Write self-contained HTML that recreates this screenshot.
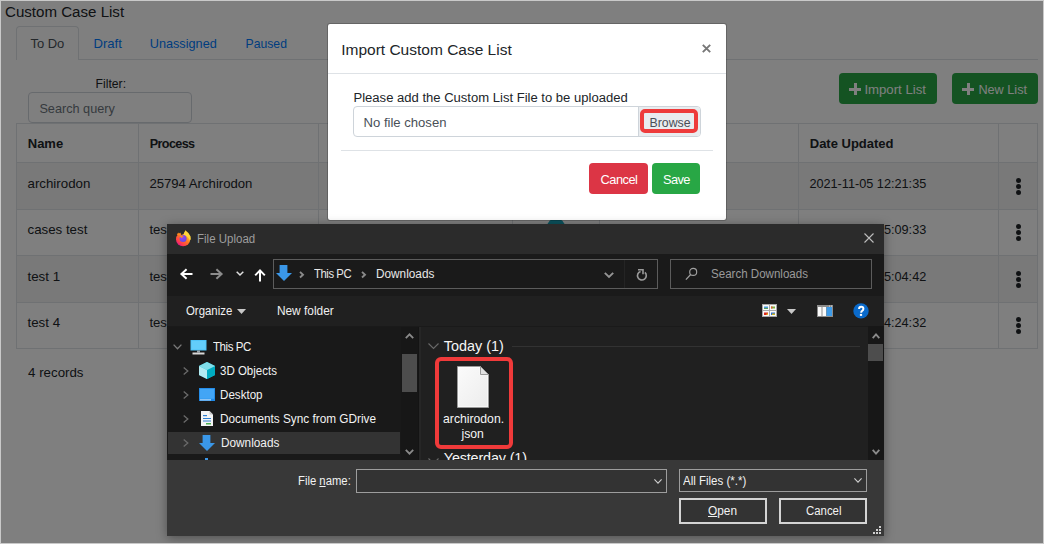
<!DOCTYPE html>
<html><head><meta charset="utf-8"><title>Import Custom Case List</title>
<style>
html,body{margin:0;padding:0;}
body{width:1044px;height:544px;position:relative;overflow:hidden;background:#fff;font-family:"Liberation Sans", sans-serif;}
.t{position:absolute;white-space:nowrap;line-height:1;}
.r{position:absolute;box-sizing:border-box;}
svg{position:absolute;overflow:visible;}
</style></head><body>

<div class="t" style="left:5.00px;top:4.00px;font-size:15.1px;color:#212529;font-weight:400;">Custom Case List</div>
<div class="r" style="left:16px;top:59px;width:1022px;height:1px;background:#dee2e6;"></div>
<div class="r" style="left:16px;top:26px;width:63px;height:34px;background:#fff;border:1px solid #dee2e6;border-bottom:none;border-radius:4px 4px 0 0;"></div>
<div class="t" style="left:30.40px;top:37.00px;font-size:13.0px;color:#495057;font-weight:400;">To Do</div>
<div class="t" style="left:93.50px;top:37.00px;font-size:13.1px;color:#007bff;font-weight:400;">Draft</div>
<div class="t" style="left:149.75px;top:38.00px;font-size:12.7px;color:#007bff;font-weight:400;">Unassigned</div>
<div class="t" style="left:245.60px;top:38.00px;font-size:12.2px;color:#007bff;font-weight:400;">Paused</div>
<div class="t" style="left:95.60px;top:78.00px;font-size:12.2px;color:#212529;font-weight:400;">Filter:</div>
<div class="r" style="left:28px;top:92px;width:164px;height:31px;background:#fff;border:1px solid #ced4da;border-radius:4px;"></div>
<div class="t" style="left:39.40px;top:103.00px;font-size:12.7px;color:#6c757d;font-weight:400;">Search query</div>
<div class="r" style="left:839px;top:73px;width:98px;height:31px;background:#28a745;border-radius:4px;"></div>
<div class="r" style="left:849px;top:87.5px;width:12px;height:3.0px;background:#fff;"></div>
<div class="r" style="left:853.5px;top:83px;width:3.0px;height:12px;background:#fff;"></div>
<div class="t" style="left:864.40px;top:83.00px;font-size:13.2px;color:#fff;font-weight:400;">Import List</div>
<div class="r" style="left:952px;top:73px;width:86px;height:31px;background:#28a745;border-radius:4px;"></div>
<div class="r" style="left:962px;top:87.5px;width:12px;height:3.0px;background:#fff;"></div>
<div class="r" style="left:966.5px;top:83px;width:3.0px;height:12px;background:#fff;"></div>
<div class="t" style="left:978.40px;top:84.00px;font-size:12.7px;color:#fff;font-weight:400;">New List</div>
<div class="r" style="left:16px;top:162px;width:1022px;height:47px;background:#f2f2f2;"></div>
<div class="r" style="left:16px;top:255px;width:1022px;height:47px;background:#f2f2f2;"></div>
<div class="r" style="left:16px;top:123px;width:1022px;height:1px;background:#dee2e6;"></div>
<div class="r" style="left:16px;top:162px;width:1022px;height:1px;background:#dee2e6;"></div>
<div class="r" style="left:16px;top:209px;width:1022px;height:1px;background:#dee2e6;"></div>
<div class="r" style="left:16px;top:255px;width:1022px;height:1px;background:#dee2e6;"></div>
<div class="r" style="left:16px;top:302px;width:1022px;height:1px;background:#dee2e6;"></div>
<div class="r" style="left:16px;top:348px;width:1022px;height:1px;background:#dee2e6;"></div>
<div class="r" style="left:16px;top:123px;width:1px;height:226px;background:#dee2e6;"></div>
<div class="r" style="left:138px;top:123px;width:1px;height:226px;background:#dee2e6;"></div>
<div class="r" style="left:318px;top:123px;width:1px;height:226px;background:#dee2e6;"></div>
<div class="r" style="left:512px;top:123px;width:1px;height:226px;background:#dee2e6;"></div>
<div class="r" style="left:599px;top:123px;width:1px;height:226px;background:#dee2e6;"></div>
<div class="r" style="left:798px;top:123px;width:1px;height:226px;background:#dee2e6;"></div>
<div class="r" style="left:998px;top:123px;width:1px;height:226px;background:#dee2e6;"></div>
<div class="r" style="left:1037px;top:123px;width:1px;height:226px;background:#dee2e6;"></div>
<div class="t" style="left:27.75px;top:137.00px;font-size:13.0px;color:#212529;font-weight:700;">Name</div>
<div class="t" style="left:149.75px;top:138.00px;font-size:12.6px;color:#212529;font-weight:700;letter-spacing:-0.62px;">Process</div>
<div class="t" style="left:809.75px;top:137.00px;font-size:13.0px;color:#212529;font-weight:700;">Date Updated</div>
<div class="t" style="left:27.50px;top:177.00px;font-size:13.3px;color:#212529;font-weight:400;">archirodon</div>
<div class="t" style="left:149.40px;top:177.00px;font-size:13.15px;color:#212529;font-weight:400;">25794 Archirodon</div>
<div class="t" style="left:809.40px;top:178.00px;font-size:12.7px;color:#212529;font-weight:400;">2021-11-05 12:21:35</div>
<div class="r" style="left:1015.5px;top:177.50000000000003px;width:5.399999999999977px;height:5.399999999999977px;background:#212529;border-radius:50%;"></div>
<div class="r" style="left:1015.5px;top:183.70000000000002px;width:5.399999999999977px;height:5.399999999999977px;background:#212529;border-radius:50%;"></div>
<div class="r" style="left:1015.5px;top:189.9px;width:5.399999999999977px;height:5.399999999999977px;background:#212529;border-radius:50%;"></div>
<div class="t" style="left:27.50px;top:223.00px;font-size:13.3px;color:#212529;font-weight:400;">cases test</div>
<div class="t" style="left:149.40px;top:223.00px;font-size:13.15px;color:#212529;font-weight:400;">test</div>
<div class="t" style="left:809.40px;top:224.00px;font-size:12.7px;color:#212529;font-weight:400;">2021-11-05 15:09:33</div>
<div class="r" style="left:1015.5px;top:223.50000000000003px;width:5.399999999999977px;height:5.399999999999977px;background:#212529;border-radius:50%;"></div>
<div class="r" style="left:1015.5px;top:229.70000000000002px;width:5.399999999999977px;height:5.399999999999977px;background:#212529;border-radius:50%;"></div>
<div class="r" style="left:1015.5px;top:235.9px;width:5.399999999999977px;height:5.399999999999977px;background:#212529;border-radius:50%;"></div>
<div class="t" style="left:27.50px;top:270.00px;font-size:13.3px;color:#212529;font-weight:400;">test 1</div>
<div class="t" style="left:149.40px;top:270.00px;font-size:13.15px;color:#212529;font-weight:400;">test</div>
<div class="t" style="left:809.40px;top:271.00px;font-size:12.7px;color:#212529;font-weight:400;">2021-11-05 15:04:42</div>
<div class="r" style="left:1015.5px;top:270.5px;width:5.399999999999977px;height:5.399999999999977px;background:#212529;border-radius:50%;"></div>
<div class="r" style="left:1015.5px;top:276.7px;width:5.399999999999977px;height:5.399999999999977px;background:#212529;border-radius:50%;"></div>
<div class="r" style="left:1015.5px;top:282.9px;width:5.399999999999977px;height:5.399999999999977px;background:#212529;border-radius:50%;"></div>
<div class="t" style="left:27.50px;top:316.00px;font-size:13.3px;color:#212529;font-weight:400;">test 4</div>
<div class="t" style="left:149.40px;top:316.00px;font-size:13.15px;color:#212529;font-weight:400;">test</div>
<div class="t" style="left:809.40px;top:317.00px;font-size:12.7px;color:#212529;font-weight:400;">2021-11-05 14:24:32</div>
<div class="r" style="left:1015.5px;top:316.5px;width:5.399999999999977px;height:5.399999999999977px;background:#212529;border-radius:50%;"></div>
<div class="r" style="left:1015.5px;top:322.7px;width:5.399999999999977px;height:5.399999999999977px;background:#212529;border-radius:50%;"></div>
<div class="r" style="left:1015.5px;top:328.9px;width:5.399999999999977px;height:5.399999999999977px;background:#212529;border-radius:50%;"></div>
<div class="t" style="left:28.10px;top:366.00px;font-size:13.3px;color:#212529;font-weight:400;">4 records</div>
<div class="r" style="left:546.5px;top:218px;width:18.0px;height:18px;background:#17a2b8;border-radius:50%;"></div>
<div class="r" style="left:0px;top:0px;width:1044px;height:544px;background:rgba(0,0,0,0.5);"></div>
<div class="r" style="left:327px;top:23px;width:400px;height:198px;background:#fff;border:1px solid rgba(0,0,0,.2);border-radius:3px;background-clip:padding-box;"></div>
<div class="t" style="left:341.20px;top:42.00px;font-size:15.5px;color:#212529;font-weight:400;">Import Custom Case List</div>
<div class="r" style="left:328px;top:73px;width:398px;height:1px;background:#dee2e6;"></div>
<svg style="left:702px;top:44px" width="9" height="9" viewBox="0 0 9 9"><path d="M0.8 0.8L8.2 8.2M8.2 0.8L0.8 8.2" stroke="#777" stroke-width="1.9"/></svg>
<div class="t" style="left:353.50px;top:91.00px;font-size:13.05px;color:#212529;font-weight:400;">Please add the Custom List File to be uploaded</div>
<div class="r" style="left:353px;top:106px;width:348px;height:31px;background:#fff;border:1px solid #ced4da;border-radius:4px;"></div>
<div class="t" style="left:363.50px;top:116.00px;font-size:13.1px;color:#495057;font-weight:400;">No file chosen</div>
<div class="r" style="left:638px;top:107px;width:62px;height:29px;background:#e9ecef;border-left:1px solid #ced4da;border-radius:0 3px 3px 0;"></div>
<div class="r" style="left:640px;top:109px;width:58px;height:24px;border:4px solid #ee3b3b;border-radius:5px;"></div>
<div class="t" style="left:649.50px;top:117.00px;font-size:12.3px;color:#495057;font-weight:400;">Browse</div>
<div class="r" style="left:341px;top:150px;width:372px;height:1px;background:#dee2e6;"></div>
<div class="r" style="left:589px;top:163px;width:59px;height:31px;background:#dc3545;border-radius:4px;"></div>
<div class="t" style="left:600.60px;top:174.00px;font-size:12.8px;color:#fff;font-weight:400;letter-spacing:-0.5px;">Cancel</div>
<div class="r" style="left:652px;top:163px;width:48px;height:31px;background:#28a745;border-radius:4px;"></div>
<div class="t" style="left:663.00px;top:174.00px;font-size:12.8px;color:#fff;font-weight:400;letter-spacing:-0.6px;">Save</div>
<div class="r" style="left:167px;top:224px;width:717px;height:312px;background:#202020;box-shadow:0 2px 10px rgba(0,0,0,0.38);"></div>
<div class="r" style="left:167px;top:224px;width:717px;height:30px;background:#2b2b2b;"></div>
<svg style="left:175px;top:230px" width="16" height="16" viewBox="0 0 16 16">
<defs><linearGradient id="ffg" x1="0.9" y1="0.1" x2="0.2" y2="0.95"><stop offset="0" stop-color="#ffe03a"/><stop offset="0.45" stop-color="#ff7a1f"/><stop offset="0.8" stop-color="#ff3b4e"/><stop offset="1" stop-color="#e0148f"/></linearGradient>
<radialGradient id="ffp" cx="0.4" cy="0.3" r="0.8"><stop offset="0" stop-color="#9b45f0"/><stop offset="1" stop-color="#5a48e0"/></radialGradient></defs>
<circle cx="8.1" cy="9.2" r="7.1" fill="url(#ffg)"/>
<path d="M4.6 0.5 H10 L8.6 4.6 Q7 4.1 6 4.9Z" fill="#2b2b2b"/>
<path d="M8.2 4.8 Q9.5 2.5 10.3 0.2 Q13.5 2.2 15.6 6.5 Q16.2 9 15 10.5 Q13 6 8.2 4.8Z" fill="#ffd43b"/>
<path d="M1.8 4.8 L3.2 2.6 L4.2 4 L5.8 3.3 L5.6 5.2Z" fill="#ff8a1f"/>
<circle cx="8.1" cy="8.6" r="3.5" fill="url(#ffp)"/>
<path d="M4.8 6.4 Q6.6 4.6 9 6 Q7.2 6.6 6.8 8.2Z" fill="#ff8c1a"/>
</svg>
<div class="t" style="left:196.50px;top:233.00px;font-size:12.0px;color:#9d9d9d;font-weight:400;transform:scaleX(0.9583);transform-origin:0 0;">File Upload</div>
<svg style="left:864px;top:233px" width="10" height="10" viewBox="0 0 10 10"><path d="M0.5 0.5L9.5 9.5M9.5 0.5L0.5 9.5" stroke="#bdbdbd" stroke-width="1.1"/></svg>
<div class="r" style="left:167px;top:254px;width:717px;height:42px;background:#1a1a1a;"></div>
<svg style="left:180px;top:268px" width="13" height="12" viewBox="0 0 13 12"><path d="M12.5 6H1.8M6.6 1.2L1.4 6L6.6 10.8" stroke="#fff" stroke-width="2" fill="none"/></svg>
<svg style="left:210px;top:268px" width="13" height="12" viewBox="0 0 13 12"><path d="M0.5 6H11.2M6.4 1.2L11.6 6L6.4 10.8" stroke="#8c8c8c" stroke-width="2" fill="none"/></svg>
<svg style="left:236px;top:271px" width="8" height="5" viewBox="0 0 8 5"><path d="M0.7 0.7L4 4L7.3 0.7" stroke="#e0e0e0" stroke-width="1.5" fill="none"/></svg>
<svg style="left:254px;top:269px" width="12" height="14" viewBox="0 0 12 14"><path d="M6 12.5V1.8M1.2 6.4L6 1.4L10.8 6.4" stroke="#fff" stroke-width="2" fill="none"/></svg>
<div class="r" style="left:273px;top:259px;width:385px;height:30px;background:#1a1a1a;border:1px solid #5c5c5c;"></div>
<div class="r" style="left:624px;top:260px;width:1px;height:28px;background:#242424;"></div>
<svg style="left:276px;top:265px" width="16" height="16" viewBox="0 0 16 16"><path d="M3.6 0H11.4V8H16L8 16L0 8H3.6Z" fill="#3a97e8"/></svg>
<svg style="left:299px;top:271px" width="6" height="8" viewBox="0 0 6 8"><path d="M1 0.9L4 3.7L1 6.5" stroke="#8a8a8a" stroke-width="1.9" fill="none"/></svg>
<div class="t" style="left:313.90px;top:268.00px;font-size:12.0px;color:#e8e8e8;font-weight:400;letter-spacing:-0.45px;transform:scaleX(0.9417);transform-origin:0 0;">This PC</div>
<svg style="left:361px;top:271px" width="6" height="8" viewBox="0 0 6 8"><path d="M1 0.9L4 3.7L1 6.5" stroke="#8a8a8a" stroke-width="1.9" fill="none"/></svg>
<div class="t" style="left:375.60px;top:268.00px;font-size:12.0px;color:#e8e8e8;font-weight:400;transform:scaleX(0.9833);transform-origin:0 0;">Downloads</div>
<svg style="left:604px;top:272px" width="10" height="6" viewBox="0 0 10 6"><path d="M0.8 0.8L5 5L9.2 0.8" stroke="#959595" stroke-width="1.9" fill="none"/></svg>
<svg style="left:636px;top:268px" width="12" height="13" viewBox="0 0 12 13"><path d="M8.9 4.4A4.4 4.4 0 1 1 4.6 3.4" stroke="#9a9a9a" stroke-width="1.6" fill="none"/><path d="M2 1.8H7V6.2" stroke="#9a9a9a" stroke-width="1.6" fill="none"/></svg>
<div class="r" style="left:670px;top:259px;width:202px;height:30px;background:#1a1a1a;border:1px solid #5c5c5c;"></div>
<svg style="left:685px;top:268px" width="13" height="13" viewBox="0 0 13 13"><circle cx="8.2" cy="3.9" r="3.5" stroke="#a0a0a0" stroke-width="1.15" fill="none"/><path d="M5.7 6.5L0.9 11.7" stroke="#a0a0a0" stroke-width="1.2"/></svg>
<div class="t" style="left:711.25px;top:268.00px;font-size:12.0px;color:#9a9a9a;font-weight:400;transform:scaleX(0.9625);transform-origin:0 0;">Search Downloads</div>
<div class="r" style="left:167px;top:296px;width:717px;height:30px;background:#202020;"></div>
<div class="t" style="left:185.60px;top:305.00px;font-size:12.0px;color:#f0f0f0;font-weight:400;transform:scaleX(0.9500);transform-origin:0 0;">Organize</div>
<svg style="left:237px;top:309px" width="9" height="5" viewBox="0 0 9 5"><path d="M0 0H9L4.5 5Z" fill="#c8c8c8"/></svg>
<div class="t" style="left:276.90px;top:306.00px;font-size:11.9px;color:#f0f0f0;font-weight:400;">New folder</div>
<svg style="left:762px;top:304px" width="15" height="13" viewBox="0 0 15 13">
<rect x="0" y="0" width="15" height="13" fill="#a8a8a8"/>
<rect x="1" y="1" width="6" height="5" fill="#fafafa"/><rect x="8" y="1" width="6" height="5" fill="#fafafa"/>
<rect x="1" y="7" width="6" height="5" fill="#fafafa"/><rect x="8" y="7" width="6" height="5" fill="#fafafa"/>
<rect x="2" y="2.5" width="4" height="2" fill="#4a9ad8"/><rect x="2" y="4" width="4" height="1" fill="#5aa05a"/>
<rect x="9" y="2.5" width="4" height="2" fill="#7cb342"/><rect x="9" y="2.5" width="1.5" height="2" fill="#e05a3a"/>
<rect x="2" y="8.5" width="4" height="2.5" fill="#d8281e"/><rect x="4.5" y="9.5" width="1.5" height="1.5" fill="#f0c020"/>
<rect x="9" y="8.5" width="4" height="2.5" fill="#2f6fd0"/><rect x="10" y="9.5" width="3" height="1.5" fill="#c8b020"/>
</svg>
<svg style="left:787px;top:309px" width="9" height="5" viewBox="0 0 9 5"><path d="M0 0H9L4.5 5Z" fill="#c8c8c8"/></svg>
<svg style="left:817px;top:305px" width="16" height="12" viewBox="0 0 16 12">
<rect x="0" y="0" width="16" height="12" fill="#8c8c8c"/>
<rect x="1" y="2" width="3.5" height="9" fill="#fafafa"/>
<rect x="5.5" y="2" width="3.5" height="9" fill="#fafafa"/>
<rect x="9.5" y="2" width="5.5" height="9" fill="#3d9be9"/>
<rect x="12" y="0.6" width="1" height="1" fill="#ddd"/><rect x="14" y="0.6" width="1" height="1" fill="#ddd"/>
</svg>
<svg style="left:853px;top:303px" width="16" height="16" viewBox="0 0 16 16"><circle cx="8" cy="7.9" r="7.7" fill="#0a6acb"/><path d="M6.1 6 Q6.1 3.8 8.2 3.8 Q10.4 3.8 10.4 5.8 Q10.4 7.1 9.1 7.9 Q8.2 8.4 8.2 9.8" stroke="#fff" stroke-width="2" fill="none"/><rect x="6.9" y="10.9" width="2.2" height="2" fill="#fff"/></svg>
<div class="r" style="left:167px;top:326px;width:251px;height:134px;background:#191919;"></div>
<div class="r" style="left:401px;top:326px;width:17px;height:134px;background:#171717;"></div>
<div class="r" style="left:402px;top:354px;width:15px;height:38px;background:#4d4d4d;"></div>
<svg style="left:405px;top:333px" width="9" height="6" viewBox="0 0 9 6"><path d="M0.8 5.2L4.5 1.3L8.2 5.2" stroke="#8a8a8a" stroke-width="1.8" fill="none"/></svg>
<svg style="left:405px;top:449px" width="9" height="6" viewBox="0 0 9 6"><path d="M0.8 0.8L4.5 4.7L8.2 0.8" stroke="#8a8a8a" stroke-width="1.8" fill="none"/></svg>
<div class="r" style="left:418px;top:326px;width:1px;height:134px;background:#141414;"></div>
<div class="r" style="left:419px;top:326px;width:2px;height:134px;background:#262626;"></div>
<div class="r" style="left:168px;top:432px;width:232px;height:22px;background:#333333;"></div>
<svg style="left:173px;top:344px" width="9" height="6" viewBox="0 0 9 6"><path d="M0.6 0.6L4.5 4.8L8.4 0.6" stroke="#7a7a7a" stroke-width="1.3" fill="none"/></svg>
<svg style="left:183px;top:367px" width="6" height="8" viewBox="0 0 6 8"><path d="M0.7 0.6L4.8 4L0.7 7.4" stroke="#6a6a6a" stroke-width="1.3" fill="none"/></svg>
<svg style="left:183px;top:391px" width="6" height="8" viewBox="0 0 6 8"><path d="M0.7 0.6L4.8 4L0.7 7.4" stroke="#6a6a6a" stroke-width="1.3" fill="none"/></svg>
<svg style="left:183px;top:415px" width="6" height="8" viewBox="0 0 6 8"><path d="M0.7 0.6L4.8 4L0.7 7.4" stroke="#6a6a6a" stroke-width="1.3" fill="none"/></svg>
<svg style="left:183px;top:439px" width="6" height="8" viewBox="0 0 6 8"><path d="M0.7 0.6L4.8 4L0.7 7.4" stroke="#6a6a6a" stroke-width="1.3" fill="none"/></svg>
<svg style="left:190px;top:340px" width="17" height="15" viewBox="0 0 17 15">
<rect x="0.5" y="0" width="16" height="10.5" fill="#4fc3f7"/><rect x="1.5" y="1" width="14" height="8.5" fill="#63cdfa"/>
<rect x="7" y="10.5" width="3" height="2" fill="#9aa7b0"/><rect x="2.5" y="12.5" width="12" height="2" fill="#d8d8d8"/>
</svg>
<div class="t" style="left:213.10px;top:341.00px;font-size:12.0px;color:#f2f2f2;font-weight:400;letter-spacing:-0.45px;transform:scaleX(0.9583);transform-origin:0 0;">This PC</div>
<svg style="left:199px;top:362px" width="16" height="17" viewBox="0 0 16 17">
<path d="M8 0L16 4V13L8 17L0 13V4Z" fill="#26c6da"/><path d="M0 4L8 8V17L0 13Z" fill="#b2ebf2"/><path d="M8 8L16 4V13L8 17Z" fill="#00acc1"/><path d="M8 0L16 4L8 8L0 4Z" fill="#80deea"/>
</svg>
<div class="t" style="left:220.00px;top:365.00px;font-size:12.0px;color:#f2f2f2;font-weight:400;transform:scaleX(0.9583);transform-origin:0 0;">3D Objects</div>
<svg style="left:199px;top:388px" width="16" height="13" viewBox="0 0 16 13">
<rect x="0" y="0" width="16" height="13" fill="#1e88e5"/><rect x="0.8" y="0.8" width="14.4" height="10" fill="#42a5f5"/><rect x="1" y="11.5" width="11" height="0.8" fill="#fff"/>
</svg>
<div class="t" style="left:220.00px;top:389.00px;font-size:12.0px;color:#f2f2f2;font-weight:400;transform:scaleX(0.9667);transform-origin:0 0;">Desktop</div>
<svg style="left:201px;top:411px" width="12" height="15" viewBox="0 0 12 15">
<path d="M0 0H8.5L12 3.5V15H0Z" fill="#f4f4f4"/><path d="M8.5 0V3.5H12Z" fill="#c8c8c8"/>
<rect x="2" y="4" width="4" height="1.2" fill="#2f7fd0"/><rect x="2" y="7" width="8" height="1" fill="#2f7fd0"/><rect x="2" y="9.5" width="8" height="1" fill="#2f7fd0"/><rect x="5" y="12" width="5" height="1.5" fill="#4caf50"/>
</svg>
<div class="t" style="left:220.00px;top:413.00px;font-size:12.0px;color:#f2f2f2;font-weight:400;transform:scaleX(0.9833);transform-origin:0 0;">Documents Sync from GDrive</div>
<svg style="left:199px;top:435px" width="16" height="16" viewBox="0 0 16 16"><path d="M3.6 0H11.4V8H16L8 16L0 8H3.6Z" fill="#3a97e8"/></svg>
<div class="t" style="left:220.60px;top:437.00px;font-size:12.0px;color:#f2f2f2;font-weight:400;transform:scaleX(0.9833);transform-origin:0 0;">Downloads</div>
<div class="r" style="left:205px;top:458px;width:3px;height:2px;background:#3c96e6;"></div>
<div class="r" style="left:421px;top:326px;width:447px;height:134px;background:#202020;"></div>
<div class="r" style="left:167px;top:326px;width:717px;height:1px;background:#1a1a1a;"></div>
<div class="r" style="left:868px;top:326px;width:16px;height:134px;background:#171717;"></div>
<div class="r" style="left:868px;top:344px;width:15px;height:17px;background:#4d4d4d;"></div>
<svg style="left:872px;top:333px" width="8" height="6" viewBox="0 0 8 6"><path d="M0.7 5.2L4 1.3L7.3 5.2" stroke="#8a8a8a" stroke-width="1.8" fill="none"/></svg>
<svg style="left:872px;top:449px" width="8" height="6" viewBox="0 0 8 6"><path d="M0.7 0.8L4 4.7L7.3 0.8" stroke="#8a8a8a" stroke-width="1.8" fill="none"/></svg>
<svg style="left:428px;top:343px" width="11" height="6" viewBox="0 0 11 6"><path d="M0.5 0.5L5.5 5.5L10.5 0.5" stroke="#6a6a6a" stroke-width="1.1" fill="none"/></svg>
<div class="t" style="left:443.75px;top:339.00px;font-size:14.4px;color:#f5f5f5;font-weight:400;">Today (1)</div>
<div class="r" style="left:512px;top:346px;width:348px;height:1px;background:#323232;"></div>
<div class="r" style="left:435px;top:357px;width:78px;height:92px;border:4px solid #f03a3a;border-radius:6px;"></div>
<svg style="left:457px;top:366px" width="32" height="42" viewBox="0 0 32 42">
<defs><linearGradient id="pg" x1="0" y1="0" x2="1" y2="1"><stop offset="0" stop-color="#fbfbfb"/><stop offset="1" stop-color="#ececec"/></linearGradient></defs>
<path d="M0.5 0.5H23.5L31.5 8.5V41.5H0.5Z" fill="url(#pg)" stroke="#9a9a9a" stroke-width="1"/>
<path d="M1.5 1.5H23V9H30.5V40.5H1.5Z" fill="none" stroke="#ffffff" stroke-width="0.8" opacity="0.7"/>
<path d="M23.5 0.5V8.5H31.5Z" fill="#e2e2e2" stroke="#9a9a9a" stroke-width="1" stroke-linejoin="round"/>
</svg>
<div class="t" style="left:443.10px;top:413.00px;font-size:12.2px;color:#f5f5f5;font-weight:400;">archirodon.</div>
<div class="t" style="left:461.50px;top:428.00px;font-size:12.2px;color:#f5f5f5;font-weight:400;">json</div>
<div style="position:absolute;left:421px;top:326px;width:447px;height:134px;overflow:hidden;">
<div class="t" style="left:22.75px;top:125px;font-size:14.4px;color:#f5f5f5;letter-spacing:-0.15px;">Yesterday (1)</div>
<svg style="left:7px;top:132px" width="11" height="6" viewBox="0 0 11 6"><path d="M0.5 0.5L5.5 5.5L10.5 0.5" stroke="#6a6a6a" stroke-width="1.1" fill="none"/></svg>
</div>
<div class="r" style="left:167px;top:460px;width:717px;height:76px;background:#383838;"></div>
<div class="t" style="left:297.50px;top:475.00px;font-size:12.0px;color:#f2f2f2;font-weight:400;transform:scaleX(0.9417);transform-origin:0 0;">File <u>n</u>ame:</div>
<div class="r" style="left:356px;top:469px;width:311px;height:24px;background:#333333;border:1px solid #9d9d9d;"></div>
<svg style="left:654px;top:479px" width="8" height="5" viewBox="0 0 8 5"><path d="M0.4 0.4L4 4.2L7.6 0.4" stroke="#cfcfcf" stroke-width="1.1" fill="none"/></svg>
<div class="r" style="left:679px;top:469px;width:188px;height:23px;background:#333333;border:1px solid #9d9d9d;"></div>
<div class="t" style="left:683.10px;top:475.00px;font-size:12.0px;color:#f2f2f2;font-weight:400;transform:scaleX(0.9583);transform-origin:0 0;">All Files (*.*)</div>
<svg style="left:854px;top:478px" width="8" height="5" viewBox="0 0 8 5"><path d="M0.4 0.4L4 4.2L7.6 0.4" stroke="#cfcfcf" stroke-width="1.1" fill="none"/></svg>
<div class="r" style="left:679px;top:498px;width:88px;height:26px;background:#333333;border:2px solid #d4d4d4;"></div>
<div class="t" style="left:708.00px;top:505.00px;font-size:12.0px;color:#f2f2f2;font-weight:400;transform:scaleX(0.9875);transform-origin:0 0;"><u>O</u>pen</div>
<div class="r" style="left:779px;top:498px;width:88px;height:26px;background:#333333;border:2px solid #d4d4d4;"></div>
<div class="t" style="left:805.50px;top:505.00px;font-size:12.0px;color:#f2f2f2;font-weight:400;transform:scaleX(0.9500);transform-origin:0 0;">Cancel</div>
<div class="r" style="left:879px;top:526px;width:2px;height:2px;background:#cfcfcf;"></div>
<div class="r" style="left:876px;top:529px;width:2px;height:2px;background:#cfcfcf;"></div>
<div class="r" style="left:879px;top:529px;width:2px;height:2px;background:#cfcfcf;"></div>
<div class="r" style="left:873px;top:532px;width:2px;height:2px;background:#cfcfcf;"></div>
<div class="r" style="left:876px;top:532px;width:2px;height:2px;background:#cfcfcf;"></div>
<div class="r" style="left:879px;top:532px;width:2px;height:2px;background:#cfcfcf;"></div>
<div class="r" style="left:0px;top:0px;width:1044px;height:544px;border:1px solid #c9c9c9;"></div>
</body></html>
